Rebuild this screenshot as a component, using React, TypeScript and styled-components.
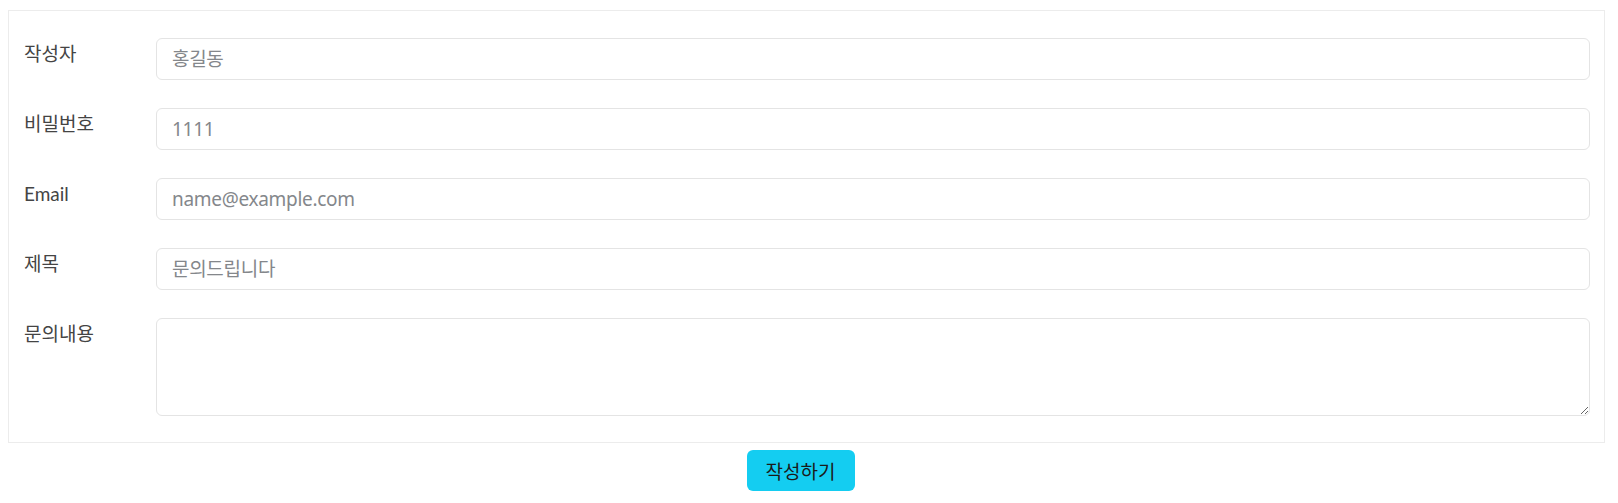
import React from "react"
import styled, { createGlobalStyle } from "styled-components"

const GlobalStyle = createGlobalStyle`
  body {
    margin: 0;
    background: #ffffff;
    font-family: Lato, "Noto Sans CJK KR", sans-serif;
    color: #3a3a3a;
  }
`

const Page = styled.div`
  padding: 10px 13px 0 8px;
`

const FormBox = styled.div`
  border: 1px solid #ececec;
  padding: 27px 14px 26px 15px;
  display: flex;
  flex-direction: column;
  gap: 28px;
`

const Row = styled.div`
  display: grid;
  grid-template-columns: 132px 1fr;
  align-items: start;
`

const Label = styled.label`
  font-size: 19px;
  line-height: 26px;
  padding-top: 3px;
  color: #444;
`

const fieldStyle = `
  box-sizing: border-box;
  width: 100%;
  border: 1px solid #e4e4e4;
  border-radius: 6px;
  padding: 0 15px;
  font-family: "Noto Sans", "Noto Sans CJK KR", sans-serif;
  font-size: 19px;
  letter-spacing: -0.3px;
  color: #333;
  background: #fff;
  outline: none;

  &::placeholder {
    color: #84878b;
  }
`

const Input = styled.input`
  ${fieldStyle};
  height: 42px;
`

const TextArea = styled.textarea<{ $rows: number }>`
  ${fieldStyle};
  display: block;
  height: ${p => p.$rows}px;
  padding: 8px 15px;
  resize: vertical;
`

const Actions = styled.div`
  display: flex;
  justify-content: center;
  padding: 7px 12px 0 0;
`

const SubmitButton = styled.button`
  width: 108px;
  height: 41px;
  border: 0;
  border-radius: 6px;
  background: #14cdf1;
  color: #1a1a1a;
  font-family: Lato, "Noto Sans CJK KR", sans-serif;
  font-size: 19px;
  cursor: pointer;
`

const fields = [
  { label: "작성자", placeholder: "홍길동", type: "text" },
  { label: "비밀번호", placeholder: "1111", type: "password" },
  { label: "Email", placeholder: "name@example.com", type: "email" },
  { label: "제목", placeholder: "문의드립니다", type: "text" },
]

export default function App() {
  return (
    <Page>
      <GlobalStyle />
      <FormBox>
        {fields.map(f => (
          <Row key={f.label}>
            <Label>{f.label}</Label>
            <Input type={f.type} placeholder={f.placeholder} />
          </Row>
        ))}
        <Row>
          <Label>문의내용</Label>
          <TextArea $rows={98} />
        </Row>
      </FormBox>
      <Actions>
        <SubmitButton>작성하기</SubmitButton>
      </Actions>
    </Page>
  )
}
